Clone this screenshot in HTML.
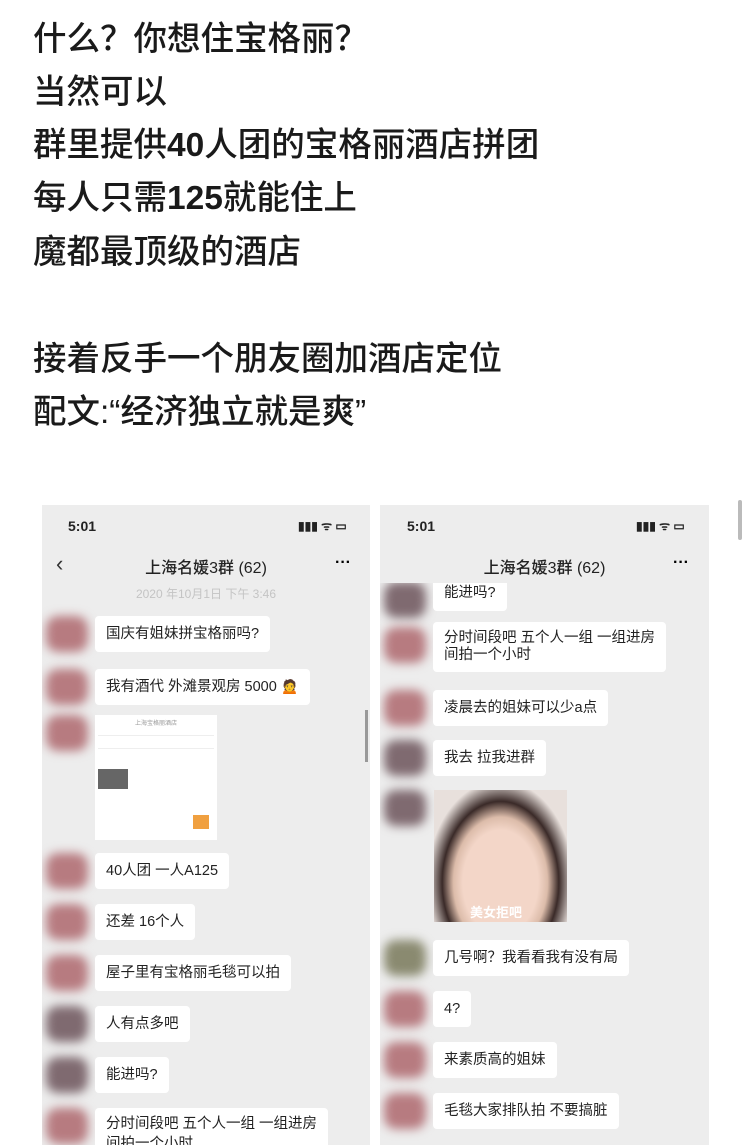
<!DOCTYPE html>
<html><head><meta charset="utf-8"><style>
*{margin:0;padding:0;box-sizing:border-box}
body{width:750px;height:1139px;background:#fff;position:relative;overflow:hidden;font-family:"Liberation Sans","Noto Sans CJK SC",sans-serif}
.t{position:absolute;left:33px;font-size:33.5px;color:#1a1a1a;font-weight:500;white-space:nowrap;line-height:40px}
.ph{position:absolute;top:505px;height:640px;background:#ededed;overflow:hidden}
.a{position:absolute}
.st{font-size:14px;font-weight:bold;color:#222}
.tt{font-size:16px;color:#222;width:100%;text-align:center;font-weight:500}
.b{position:absolute;background:#fff;border-radius:4px;font-size:14.5px;color:#222;padding:0 11px;height:36px;line-height:36px;white-space:nowrap}
.av{position:absolute;width:42px;height:36px;border-radius:12px;filter:blur(5px)}
.ts{font-size:12px;color:#c4c4c4;width:100%;text-align:center}
</style></head><body>
<div class="t" style="top:20px">什么？你想住宝格丽？</div>
<div class="t" style="top:73px">当然可以</div>
<div class="t" style="top:126px">群里提供<b>40</b>人团的宝格丽酒店拼团</div>
<div class="t" style="top:179px">每人只需<b>125</b>就能住上</div>
<div class="t" style="top:233px">魔都最顶级的酒店</div>
<div class="t" style="top:340px">接着反手一个朋友圈加酒店定位</div>
<div class="t" style="top:393px">配文:“经济独立就是爽”</div>
<div class="a" style="left:738px;top:500px;width:4px;height:40px;background:#bbb;border-radius:2px"></div>

<!-- left phone -->
<div class="ph" style="left:42px;width:328px">
 <div class="a st" style="left:26px;top:13px">5:01</div>
 <div class="a st" style="left:256px;top:12px;font-size:12px">▮▮▮ ᯤ ▭</div>
 <div class="a" style="left:14px;top:46px;font-size:22px;color:#333">‹</div>
 <div class="a tt" style="top:49px">上海名媛3群 (62)</div>
 <div class="a" style="left:293px;top:49px;font-size:16px;font-weight:bold">···</div>
 <div class="a ts" style="top:80px">2020 年10月1日 下午 3:46</div>
 <div class="av" style="left:4px;top:111px;background:#b77b80"></div>
 <div class="av" style="left:4px;top:164px;background:#b77b80"></div>
 <div class="av" style="left:4px;top:210px;background:#b77b80"></div>
 <div class="av" style="left:4px;top:348px;background:#b77b80"></div>
 <div class="av" style="left:4px;top:399px;background:#b77b80"></div>
 <div class="av" style="left:4px;top:450px;background:#b77b80"></div>
 <div class="av" style="left:4px;top:501px;background:#7f6a70"></div>
 <div class="av" style="left:4px;top:552px;background:#7f6a70"></div>
 <div class="av" style="left:4px;top:603px;background:#b77b80"></div>
 <div class="b" style="left:53px;top:111px">国庆有姐妹拼宝格丽吗?</div>
 <div class="b" style="left:53px;top:164px">我有酒代 外滩景观房 5000 🙍</div>
 <div class="a" style="left:53px;top:210px;width:122px;height:125px;background:#fff;font-size:6px;color:#999;padding:3px">
   <div style="text-align:center">上海宝格丽酒店</div>
   <div style="margin-top:8px;height:1px;background:#eee"></div>
   <div style="margin-top:12px;height:1px;background:#eee"></div>
   <div style="margin-top:20px;height:20px;width:30px;background:#666"></div>
   <div style="position:absolute;right:8px;top:100px;width:16px;height:14px;background:#f0a040"></div>
 </div>
 <div class="b" style="left:53px;top:348px">40人团 一人A125</div>
 <div class="b" style="left:53px;top:399px">还差 16个人</div>
 <div class="b" style="left:53px;top:450px">屋子里有宝格丽毛毯可以拍</div>
 <div class="b" style="left:53px;top:501px">人有点多吧</div>
 <div class="b" style="left:53px;top:552px">能进吗?</div>
 <div class="b" style="left:53px;top:603px;height:50px;line-height:20px;padding-top:6px">分时间段吧 五个人一组 一组进房<br>间拍一个小时</div>
 <div class="a" style="left:323px;top:205px;width:3px;height:52px;background:#999"></div>
</div>

<!-- right phone -->
<div class="ph" style="left:380px;width:329px">
 <div class="av" style="left:4px;top:77px;background:#7f6a70"></div>
 <div class="b" style="left:53px;top:70px">能进吗?</div>
 <div class="a" style="left:0;top:0;width:100%;height:78px;background:#ededed"></div>
 <div class="a st" style="left:27px;top:13px">5:01</div>
 <div class="a st" style="left:256px;top:12px;font-size:12px">▮▮▮ ᯤ ▭</div>
 <div class="a tt" style="top:49px">上海名媛3群 (62)</div>
 <div class="a" style="left:293px;top:49px;font-size:16px;font-weight:bold">···</div>
 <div class="av" style="left:4px;top:122px;background:#b77b80"></div>
 <div class="av" style="left:4px;top:185px;background:#b77b80"></div>
 <div class="av" style="left:4px;top:235px;background:#7f6a70"></div>
 <div class="av" style="left:4px;top:285px;background:#7f6a70"></div>
 <div class="av" style="left:4px;top:435px;background:#8a8a70"></div>
 <div class="av" style="left:4px;top:486px;background:#b77b80"></div>
 <div class="av" style="left:4px;top:537px;background:#b77b80"></div>
 <div class="av" style="left:4px;top:588px;background:#b77b80"></div>
 <div class="b" style="left:53px;top:117px;height:50px;line-height:17px;padding-top:8px">分时间段吧 五个人一组 一组进房<br>间拍一个小时</div>
 <div class="b" style="left:53px;top:185px">凌晨去的姐妹可以少a点</div>
 <div class="b" style="left:53px;top:235px">我去 拉我进群</div>
 <div class="a" style="left:54px;top:285px;width:133px;height:132px;background:radial-gradient(ellipse at 50% 70%,#f3d6c8 0 40%,#dcbcaa 50%,#3a2a28 62%,#e8e0dc 78%);"></div>
 <div class="a" style="left:90px;top:397px;color:#fff;font-size:13px;font-weight:bold">美女拒吧</div>
 <div class="b" style="left:53px;top:435px">几号啊？我看看我有没有局</div>
 <div class="b" style="left:53px;top:486px">4?</div>
 <div class="b" style="left:53px;top:537px">来素质高的姐妹</div>
 <div class="b" style="left:53px;top:588px">毛毯大家排队拍 不要搞脏</div>
</div>
</body></html>
